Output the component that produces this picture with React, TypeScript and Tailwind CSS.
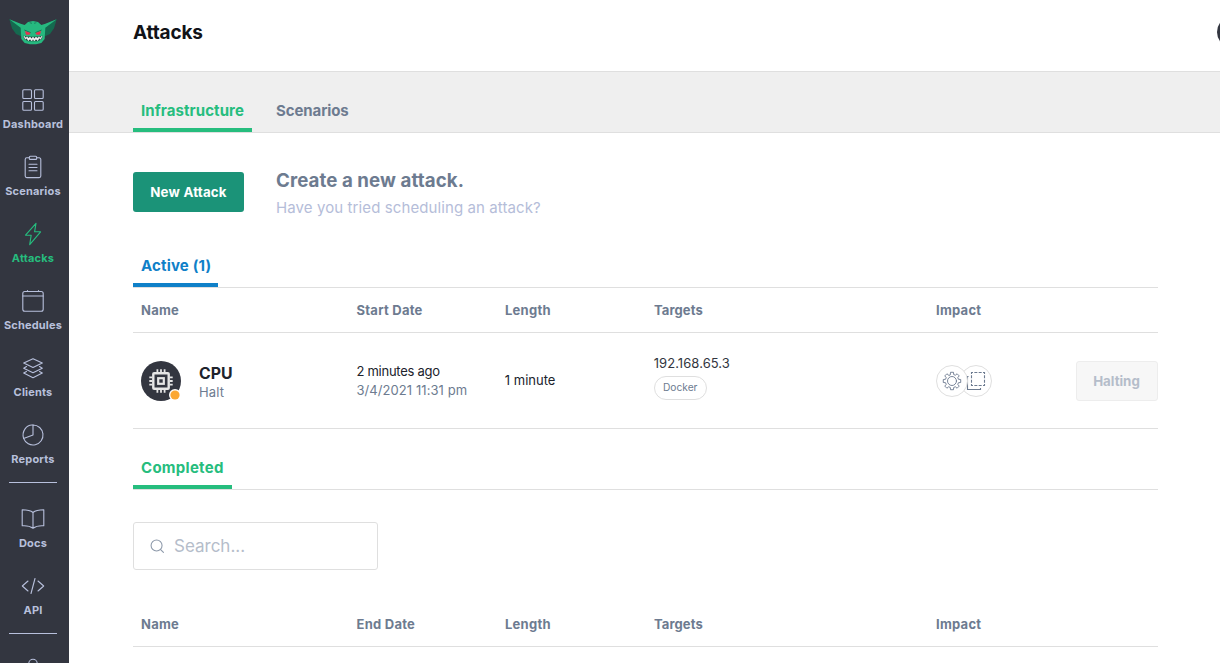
import type { ReactNode } from "react";

function Icon({ children, size = 24, sw = 1.1 }: { children: ReactNode; size?: number; sw?: number }) {
  return (
    <svg width={size} height={size} viewBox="0 0 24 24" fill="none" stroke="currentColor" strokeWidth={sw} strokeLinejoin="round" strokeLinecap="round">
      {children}
    </svg>
  );
}

function Logo() {
  return (
    <svg className="h-[28px] w-[48px]" viewBox="27 53 144 84">
      <path d="M28 57 L60 71 L66 79 L63 108 L48 101 L36 84 Z" fill="#15694f" />
      <path d="M170 57 L138 71 L132 79 L135 108 L150 101 L162 84 Z" fill="#15694f" />
      <path d="M28 57 L62 70 L74 74 L84 65 L99 62 L114 65 L124 74 L136 70 L170 57 L152 70 L136 82 L134 116 L124 128 L108 132 H90 L74 128 L64 116 L62 82 L46 70 Z" fill="#26b97f" />
      <path d="M89 67 L96 69 M102 69 L109 67" stroke="#15694f" strokeWidth="2" fill="none" />
      <path d="M73 89 L92 97 M125 89 L106 97" stroke="#15694f" strokeWidth="2.5" fill="none" />
      <path d="M75 92 L92 98 L88 103 H78 Z M123 92 L106 98 L110 103 H120 Z" fill="#e8304f" />
      <path d="M70 106 Q99 112 128 106 L125 117 L113 123 H85 L73 117 Z" fill="#23483f" />
      <path d="M72 107 L77 113 L81 109 L86 114 L90 110 L95 115 L99 110 L103 115 L108 110 L112 114 L117 109 L121 113 L126 107 L122 117 L118 113 L113 121 L108 116 L103 122 L99 116 L95 122 L90 116 L85 121 L80 113 L76 117 Z" fill="#f4f4f4" stroke="#f4f4f4" strokeWidth="1.5" />
    </svg>
  );
}

function NavItem({ label, active, children }: { label: string; active?: boolean; children: ReactNode }) {
  return (
    <a className={`flex h-[67px] shrink-0 flex-col items-center gap-1 pt-2 ${active ? "text-[#26bd7e]" : "text-[#b8c0dc]"}`}>
      <Icon>{children}</Icon>
      <span className="text-[11px] leading-4 font-bold tracking-[0.18px]">{label}</span>
    </a>
  );
}

function Sidebar() {
  return (
    <nav className="flex h-full w-[69px] shrink-0 flex-col overflow-hidden bg-[#333640] pr-[3px]">
      <div className="flex h-20 shrink-0 justify-center pt-[18px]"><Logo /></div>
      <NavItem label="Dashboard">
        <rect x="1.8" y="1.8" width="8.7" height="8.7" rx="1" /><rect x="13.5" y="1.8" width="8.7" height="8.7" rx="1" />
        <rect x="1.8" y="13.5" width="8.7" height="8.7" rx="1" /><rect x="13.5" y="13.5" width="8.7" height="8.7" rx="1" />
      </NavItem>
      <NavItem label="Scenarios">
        <path d="M8.3 2.8H5.8a1.6 1.6 0 0 0-1.6 1.6v16.6a1.6 1.6 0 0 0 1.6 1.6h12.4a1.6 1.6 0 0 0 1.6-1.6V4.4a1.6 1.6 0 0 0-1.6-1.6h-2.5" />
        <rect x="8.3" y="1.2" width="7.4" height="3.2" rx="1" /><path d="M8 9.2h8M8 12.5h8M8 15.8h8" />
      </NavItem>
      <NavItem label="Attacks" active>
        <path d="M15 1.3 4.5 13.2h5.7L8.7 22.7 19.6 9.8h-6z" />
      </NavItem>
      <NavItem label="Schedules">
        <rect x="1.8" y="2.5" width="20.4" height="19.8" rx="2" /><path d="M1.8 7h20.4M6.5 1.5v1M17.5 1.5v1" />
      </NavItem>
      <NavItem label="Clients">
        <path d="m12 2.8 9.3 4.3L12 11.4 2.7 7.1z" />
        <path d="m5.5 10.5-2.8 1.7 9.3 4.5 9.3-4.5-2.8-1.7M5.5 15.5l-2.8 1.6 9.3 4.6 9.3-4.6-2.8-1.6" />
      </NavItem>
      <NavItem label="Reports">
        <path d="M12 2a10 10 0 1 1-9.4 13.4L12 12z" /><path d="M12 2C5.5 1.2 .4 8.5 2.6 15.4" />
      </NavItem>
      <div className="mx-[9px] mb-4 h-px shrink-0 bg-[#b8c0dc]" />
      <NavItem label="Docs">
        <path d="M12 5.5C9.5 3.3 5.5 2.8 1.2 2.8v16C5.5 18.5 9 19 12 21.3 15 19 18.5 18.5 22.8 18.8v-16C18.5 2.8 14.5 3.3 12 5.5zM12 5.5v15.8" />
      </NavItem>
      <NavItem label="API">
        <path d="M7 7l-5.7 5L7 17M17 7l5.7 5L17 17M14 4.5 10 19.5" />
      </NavItem>
      <div className="mx-[9px] mb-6 h-px shrink-0 bg-[#b8c0dc]" />
      <div className="flex shrink-0 justify-center text-[#b8c0dc]">
        <Icon><circle cx="12" cy="5.5" r="4.2" /><path d="M3 22c0-6 3.5-9 9-9s9 3 9 9" /></Icon>
      </div>
    </nav>
  );
}

function TableHead({ date }: { date: string }) {
  return (
    <div className="flex h-[45px] items-center border-b border-[#dfdfdf] pt-px pl-2 text-[13px] font-bold tracking-[0.25px] text-[#6d7b90]">
      <span className="w-[215.5px]">Name</span>
      <span className="w-[148.5px]">{date}</span>
      <span className="w-[149px]">Length</span>
      <span className="w-[282px] tracking-[0.1px]">Targets</span>
      <span>Impact</span>
    </div>
  );
}

function CpuBadge() {
  return (
    <svg width="40" height="40" viewBox="0 0 40 40">
      <circle cx="20" cy="20" r="20" fill="#333640" />
      <g fill="none" stroke="#e6e6e6">
        <rect x="12.3" y="12.3" width="15.4" height="15.4" rx="0.8" strokeWidth="2.4" />
        <rect x="17.2" y="17.2" width="5.6" height="5.6" strokeWidth="2.2" />
        <path d="M16.4 8.3v3M20 8.3v3M23.6 8.3v3M16.4 28.7v3M20 28.7v3M23.6 28.7v3M8.3 16.4h3M8.3 20h3M8.3 23.6h3M28.7 16.4h3M28.7 20h3M28.7 23.6h3" strokeWidth="1.8" />
      </g>
      <circle cx="34" cy="34" r="6" fill="#fff" />
      <circle cx="34" cy="34" r="4.6" fill="#fba834" />
    </svg>
  );
}

const gearOutline =
  Array.from({ length: 8 }, (_, i) => {
    const a = (i * Math.PI) / 4 - Math.PI / 2;
    const p = (r: number, d: number) => `${(12 + r * Math.cos(a + d)).toFixed(2)} ${(12 + r * Math.sin(a + d)).toFixed(2)}`;
    return `${i ? "L" : "M"}${p(8, -0.26)}L${p(10.6, -0.17)}L${p(10.6, 0.17)}L${p(8, 0.26)}`;
  }).join("") + "Z";

export default function App() {
  return (
    <div className="flex h-[663px] w-[1220px] overflow-hidden bg-white font-['Inter',sans-serif]">
      <Sidebar />
      <main className="flex min-w-0 flex-1 flex-col">
        <header className="flex h-[71px] shrink-0 items-center justify-between overflow-hidden pb-[7px] pl-16">
          <h1 className="pt-[3px] text-[19px] font-bold tracking-[-0.15px] text-[#111318]">Attacks</h1>
          <div className="-mr-[29px] size-8 rounded-full bg-[#333640]" />
        </header>
        <div className="flex h-[62px] shrink-0 items-end gap-4 border-y border-[#dfdfdf] bg-[#efefef] pl-16 text-[15px] font-bold">
          <a className="flex h-[42px] w-[119px] border-b-4 border-[#26bd7e] pl-2 leading-[42px] tracking-[0.08px] text-[#26bd7e]">Infrastructure</a>
          <a className="flex h-[42px] px-2 leading-[42px] tracking-[-0.1px] text-[#6d7b90]">Scenarios</a>
        </div>
        <div className="flex w-[1088.5px] flex-col pl-16">
          <section className="flex gap-8 pt-[39px]">
            <button className="h-10 w-[111px] rounded-[3px] bg-[#1b9378] pt-px text-[13.3px] font-bold tracking-[0.2px] text-white">New Attack</button>
            <div className="-mt-[3px]">
              <h2 className="text-[18.7px] leading-6 font-bold tracking-[0.08px] text-[#6d7b90]">Create a new attack.</h2>
              <p className="mt-[3px] text-[15px] leading-6 tracking-[0.1px] text-[#b5bdd9]">Have you tried scheduling an attack?</p>
            </div>
          </section>
          <div className="mt-[25px] flex h-[43px] border-b border-[#dfdfdf] text-[15px] font-bold">
            <a className="flex w-[85px] border-b-4 border-[#0f80c8] pl-2 leading-[42px] tracking-[0.18px] text-[#0f80c8]">Active (1)</a>
          </div>
          <TableHead date="Start Date" />
          <div className="flex h-24 items-center border-b border-[#dfdfdf] pl-2 text-[13px] text-[#6d7b90]">
            <div className="flex w-[215.5px] items-center gap-[18px]">
              <CpuBadge />
              <div className="pt-[3px]">
                <div className="pt-px text-[15.8px] leading-[18px] font-bold text-[#20232c]">CPU</div>
                <div className="leading-[18px] tracking-[0.15px]">Halt</div>
              </div>
            </div>
            <div className="w-[148.5px] leading-[19px]">
              <div className="tracking-[-0.26px] text-[#20232c]">2 minutes ago</div>
              <div className="tracking-[0.08px]">3/4/2021 11:31 pm</div>
            </div>
            <div className="w-[149px] text-[#20232c]">1 minute</div>
            <div className="w-[282px] pb-2">
              <div className="mb-[3px] leading-[19px] tracking-[0.06px] text-[#333640]">192.168.65.3</div>
              <span className="flex h-6 w-[53px] items-center justify-center rounded-full border border-[#dfdfdf] pt-px text-[10.2px]">Docker</span>
            </div>
            <div className="flex w-[140px]">
              <span className="z-10 flex size-8 items-center justify-center rounded-full border border-[#dfdfdf] bg-white">
                <Icon size={20} sw={1.1}><path d={gearOutline} /><circle cx="12" cy="12" r="5.4" /></Icon>
              </span>
              <span className="-ml-2 flex size-8 items-center justify-center rounded-full border border-[#dfdfdf] bg-white">
                <svg width="20" height="20" viewBox="0 0 20 20" fill="none" stroke="#6d7b90" strokeWidth="1.1">
                  <path d="M5.5 1.5h13v13h-13z" strokeDasharray="3 1.333" strokeDashoffset="1.5" />
                  <path d="M2.5 5.5H1.5v13h13v-1.5" />
                </svg>
              </span>
            </div>
            <button className="h-10 w-[82px] shrink-0 rounded-[3px] border border-[#ededed] bg-[#f7f7f7] pt-[2px] text-[13.3px] font-bold text-[#b5bdca]">Halting</button>
          </div>
          <div className="mt-[18px] flex h-[43px] border-b border-[#dfdfdf] text-[15px] font-bold">
            <a className="flex w-[99px] border-b-4 border-[#26bd7e] pl-2 leading-[42px] tracking-[0.28px] text-[#26bd7e]">Completed</a>
          </div>
          <label className="mt-8 mb-8 flex h-12 w-[245px] items-center gap-[9px] rounded-[3px] border border-[#dfdfdf] pl-4 text-[#8c98a9]">
            <Icon size={15} sw={1.7}><circle cx="10.5" cy="10.5" r="8.8" /><path d="m17 17 4.5 4.5" /></Icon>
            <span className="pt-[2px] text-[17px] text-[#b5bdca]">Search...</span>
          </label>
          <TableHead date="End Date" />
        </div>
      </main>
    </div>
  );
}
